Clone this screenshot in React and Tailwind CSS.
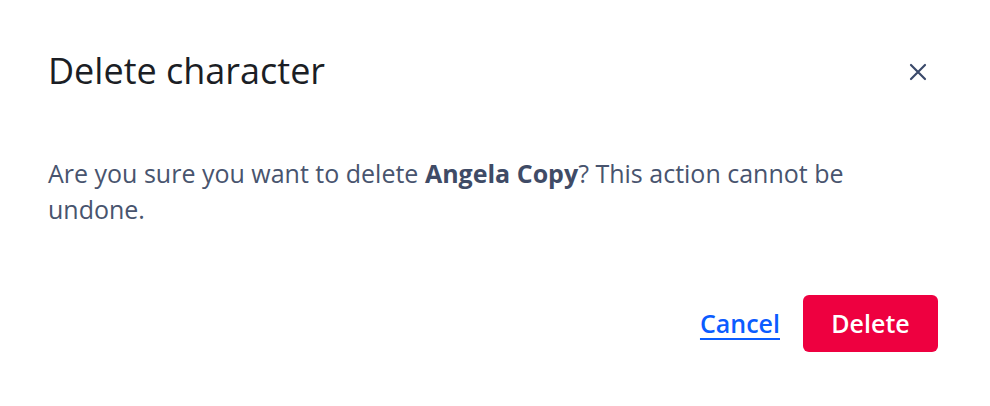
export default function App() {
  return (
    <div
      className="w-[990px] h-[406px] bg-white flex flex-col pl-[48px] pr-[52px] pt-[47px]"
      style={{ fontFamily: '"Open Sans", "Noto Sans", sans-serif' }}
    >
      <div className="flex items-start justify-between">
        <h1 className="text-[36px] leading-[48px] text-[#1b1e25] font-normal">Delete character</h1>
        <button className="mt-[16px] mr-[11px] w-[18px] h-[18px] text-[#3b4a6b]">
          <svg viewBox="0 0 18 18" width="18" height="18" fill="none" stroke="currentColor" strokeWidth="2.2" strokeLinecap="round">
            <path d="M2 2L16 16M16 2L2 16" />
          </svg>
        </button>
      </div>
      <p className="mt-[60px] text-[25px] leading-[36px] text-[#48546e]">
        Are you sure you want to delete <span className="font-bold text-[#3f4b66]">Angela Copy</span>? This action cannot be undone.
      </p>
      <div className="mt-[68px] flex items-center justify-end gap-[23px]">
        <a href="#" className="text-[25px] font-semibold text-[#0b5cff] underline underline-offset-[5px]">Cancel</a>
        <button className="w-[135px] h-[57px] rounded-[6px] bg-[#ee0040] text-white text-[25px] font-semibold">Delete</button>
      </div>
    </div>
  );
}
